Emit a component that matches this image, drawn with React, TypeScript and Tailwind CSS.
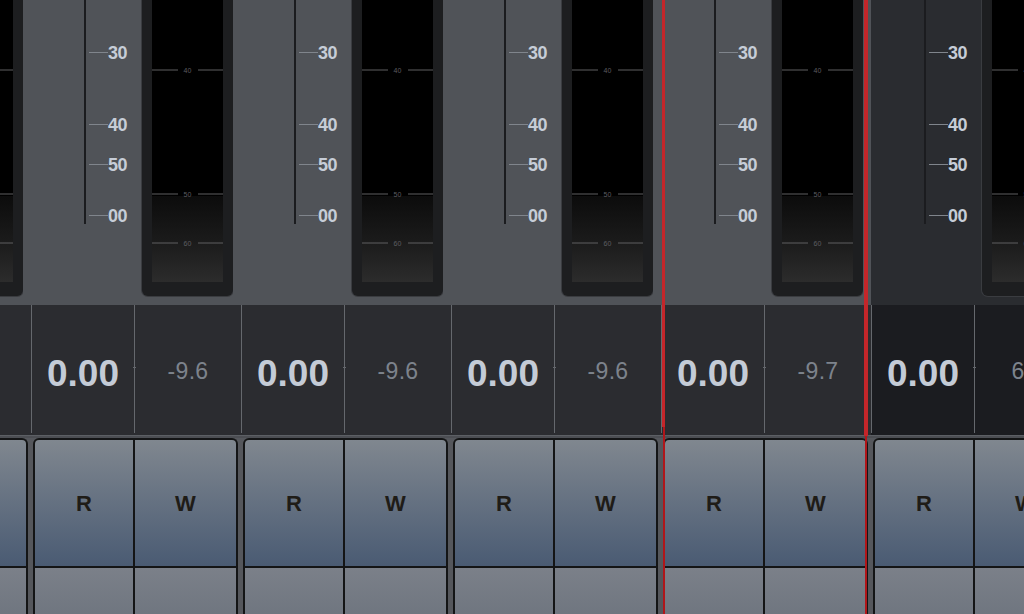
import React from 'react';

type Strip = {
  id: string;
  gain: string;
  peak: string;
  selected?: boolean;
  dark?: boolean;
  offscreen?: boolean;
};

const strips: Strip[] = [
  { id: 'ch0', gain: '0.00', peak: '-9.6', offscreen: true },
  { id: 'ch1', gain: '0.00', peak: '-9.6' },
  { id: 'ch2', gain: '0.00', peak: '-9.6' },
  { id: 'ch3', gain: '0.00', peak: '-9.6' },
  { id: 'ch4', gain: '0.00', peak: '-9.7', selected: true },
  { id: 'ch5', gain: '0.00', peak: '6.8', dark: true },
];

// fader scale marks (y in px from top of the strip)
const faderMarks = [
  { label: '30', y: 52 },
  { label: '40', y: 124 },
  { label: '50', y: 164 },
  { label: '00', y: 215 },
];

const meterMarks = [
  { label: '40', y: 70 },
  { label: '50', y: 194 },
  { label: '60', y: 243 },
];

const FaderScale: React.FC<{ showLabels: boolean }> = ({ showLabels }) => (
  <div className="relative w-[111px] h-full">
    <div className="absolute left-[53px] top-0 w-[2px] h-[224px] bg-[#1b1c1f]" />
    {showLabels &&
      faderMarks.map(m => (
        <div key={m.label}>
          <div
            className="absolute left-[58px] w-[19px] h-px bg-[#80858c]"
            style={{ top: m.y }}
          />
          <span
            className="absolute left-[77px] -translate-y-1/2 text-[18px] font-bold leading-none text-[#c6cdd7] tracking-[-0.5px]"
            style={{ top: m.y + 1 }}
          >
            {m.label}
          </span>
        </div>
      ))}
  </div>
);

const Meter: React.FC<{ showLabels: boolean }> = ({ showLabels }) => (
  <div className="w-[91px] h-[296px] bg-[#1d1e20] rounded-b-[6px] px-[10px] pb-[14px] shadow-[0_0_0_1px_#3a3c40]">
    <div className="relative h-full bg-black">
      <div className="absolute left-0 right-0 top-[196px] bottom-0 bg-gradient-to-b from-[#0c0c0c] via-[#1a1a1a] to-[#2c2c2c]" />
      {meterMarks.map(m => (
        <div
          key={m.label}
          className="absolute left-0 right-0 flex items-center -translate-y-1/2"
          style={{ top: m.y }}
        >
          <div className="flex-1 h-px bg-[#5e5f61]" />
          <span className="w-[20px] text-center text-[7px] leading-none text-[#5c5d60]">
            {showLabels ? m.label : ''}
          </span>
          <div className="flex-1 h-px bg-[#5e5f61]" />
        </div>
      ))}
    </div>
  </div>
);

const ChannelStrip: React.FC<{ strip: Strip }> = ({ strip }) => {
  const topBg = strip.dark ? 'bg-[#2a2c30]' : 'bg-[#505358]';
  const rowBg = strip.dark ? 'bg-[#1b1c20]' : 'bg-[#2b2c30]';
  return (
    <div className="relative w-[210px] h-full shrink-0 flex flex-col">
      {/* fader + meter */}
      <div className={`h-[305px] shrink-0 flex ${topBg}`}>
        <FaderScale showLabels={!strip.offscreen} />
        <Meter showLabels={!strip.offscreen} />
        <div className="w-[8px] bg-[#505358]" />
      </div>

      {/* gain / peak readouts */}
      <div className={`h-[130px] shrink-0 flex ${rowBg}`}>
        <div className="w-px h-[128px] bg-[#65686d]" />
        <div className="w-[102px] flex items-center justify-center pt-[6px]">
          {!strip.offscreen && (
            <span className="text-[37px] font-bold leading-none text-[#c4cbd6]">{strip.gain}</span>
          )}
        </div>
        <div className="relative w-px h-[128px] bg-[#65686d]">
          <div className="absolute top-[62px] -left-px w-[3px] h-px bg-[#65686d]" />
        </div>
        <div className="flex-1 flex items-center justify-center pt-[2px]">
          {!strip.offscreen && (
            <span className="text-[23px] leading-none text-[#7d838c] tracking-[0.3px]">{strip.peak}</span>
          )}
        </div>
      </div>
      <div className="h-[3px] shrink-0 bg-[#4c4e53] border-t border-[#5c5f64]" />

      {/* automation buttons */}
      <div className="flex-1 min-h-0 bg-[#55575c]">
        <div className="ml-[2px] w-[205px] h-full border-2 border-b-0 border-[#141516] rounded-t-[6px] overflow-hidden bg-[#141516] grid grid-cols-[98px_101px] gap-[2px] grid-rows-[126px_60px] content-start">
          <div className="flex items-center justify-center bg-gradient-to-b from-[#80878f] to-[#4a5b73]">
            {!strip.offscreen && <span className="text-[22px] font-bold text-[#1f1c17]">R</span>}
          </div>
          <div className="flex items-center justify-center bg-gradient-to-b from-[#80878f] to-[#4a5b73]">
            {!strip.offscreen && <span className="text-[22px] font-bold text-[#1f1c17]">W</span>}
          </div>
          <div className="bg-gradient-to-b from-[#7b8089] to-[#6c737d]" />
          <div className="bg-gradient-to-b from-[#7b8089] to-[#6c737d]" />
        </div>
      </div>

      {strip.selected && (
        <>
          <div className="absolute left-px top-0 w-[3px] h-[427px] bg-[#c4262a]" />
          <div className="absolute left-[2px] top-[427px] bottom-0 w-[2px] bg-[#b0161a]" />
          <div className="absolute left-[203px] top-0 w-[4px] h-[436px] bg-[#c4262a]" />
          <div className="absolute left-[204px] top-[436px] bottom-0 w-[2px] bg-[#b0161a]" />
        </>
      )}
    </div>
  );
};

const App: React.FC = () => {
  return (
    <div
      className="w-[1024px] h-[614px] overflow-hidden bg-[#505358]"
      style={{ fontFamily: '"Liberation Sans", Arial, sans-serif' }}
    >
      <div className="flex h-full -ml-[179px]">
        {strips.map(s => (
          <ChannelStrip key={s.id} strip={s} />
        ))}
      </div>
    </div>
  );
};

export default App;
